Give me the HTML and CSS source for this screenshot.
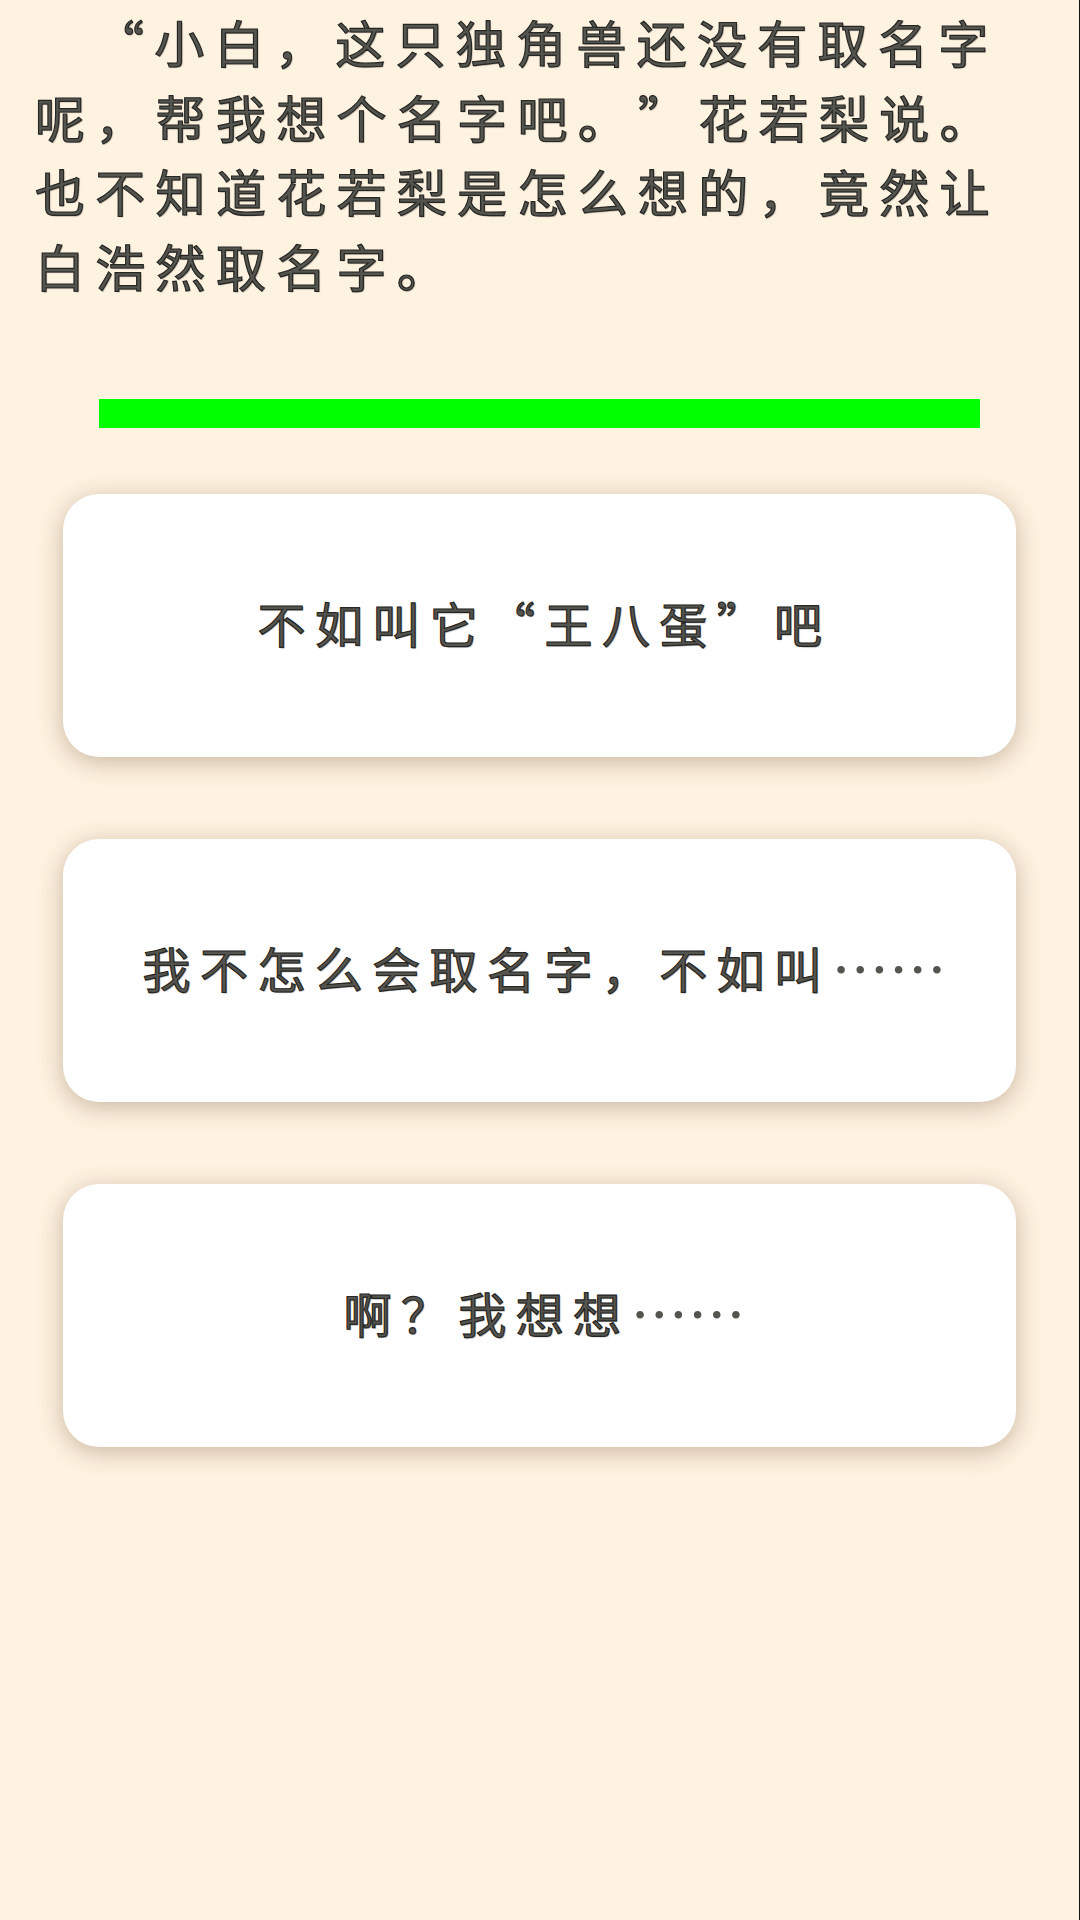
FILE: index.html
```html
<!DOCTYPE html>
<html lang="zh-CN">
<head>
  <meta charset="UTF-8" />
  <title>花若梨</title>
  <meta name="viewport" content="width=device-width, initial-scale=1.0" />
  <link rel="stylesheet" href="styles.css">
</head>
<body>
  <div class="page">
    <p class="story">“小白，这只独角兽还没有取名字呢，帮我想个名字吧。”花若梨说。也不知道花若梨是怎么想的，竟然让白浩然取名字。</p>
    <div class="timer"></div>
    <div class="choices">
      <button class="choice">不如叫它“王八蛋”吧</button>
      <button class="choice">我不怎么会取名字，不如叫<span class="dots">……</span></button>
      <button class="choice">啊？我想想<span class="dots">……</span></button>
    </div>
  </div>
</body>
</html>
```

FILE: styles.css
```css
* { box-sizing: border-box; }
html, body { margin: 0; padding: 0; }
body {
  background: #fef2e0;
  font-family: "Noto Sans CJK SC", "Noto Sans", sans-serif;
}
.page {
  height: 1920px;
  padding-top: 4px;
  border-right: 1px solid #111;
}
.story {
  margin: 0;
  padding: 0 0 0 35px;
  width: 1020px;
  font-size: 50px;
  line-height: 74.6px;
  letter-spacing: 10.3px;
  text-indent: 59px;
  text-spacing-trim: space-all;
  color: #55554f;
  -webkit-text-stroke: 1.2px #262624;
  text-shadow: 1px 1px 1px rgba(0,0,0,0.35);
}
.timer {
  width: 881px;
  height: 29px;
  margin: 97px 0 0 99px;
  background: #00ff00;
}
.choices {
  display: flex;
  flex-direction: column;
  gap: 82px;
  margin: 66px 0 0 63px;
  width: 953px;
}
.choice {
  height: 263px;
  padding: 0 0 7px 10px;
  border: none;
  border-radius: 36px;
  background: #fff;
  box-shadow: 0 5px 24px rgba(90,60,30,0.32);
  font-family: inherit;
  font-size: 48px;
  letter-spacing: 9.4px;
  text-spacing-trim: space-all;
  color: #55554f;
  -webkit-text-stroke: 1.2px #262624;
  text-shadow: 1px 1px 1px rgba(0,0,0,0.35);
}
.dots {
  font-size: 57.5px;
  line-height: 1;
  letter-spacing: 0;
  vertical-align: -4px;
  -webkit-text-stroke: 0;
  text-shadow: none;
}
```
